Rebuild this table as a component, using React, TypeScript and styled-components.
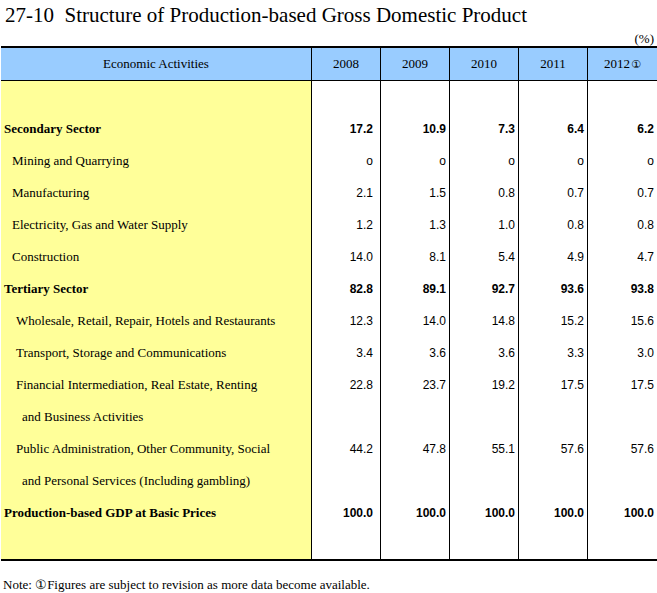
import styled, { createGlobalStyle } from 'styled-components'

const GlobalStyle = createGlobalStyle`
  html, body {
    margin: 0;
    padding: 0;
    background: #ffffff;
  }
  body {
    font-family: 'Liberation Serif', 'Times New Roman', serif;
    color: #000000;
  }
`

type Kind = 'sector' | 'item' | 'sub' | 'cont'

interface RowData {
  label: string
  kind: Kind
  values: string[]
}

const years = ['2008', '2009', '2010', '2011', '2012']

const rows: RowData[] = [
  { label: 'Secondary Sector', kind: 'sector', values: ['17.2', '10.9', '7.3', '6.4', '6.2'] },
  { label: 'Mining and Quarrying', kind: 'item', values: ['o', 'o', 'o', 'o', 'o'] },
  { label: 'Manufacturing', kind: 'item', values: ['2.1', '1.5', '0.8', '0.7', '0.7'] },
  { label: 'Electricity, Gas and Water Supply', kind: 'item', values: ['1.2', '1.3', '1.0', '0.8', '0.8'] },
  { label: 'Construction', kind: 'item', values: ['14.0', '8.1', '5.4', '4.9', '4.7'] },
  { label: 'Tertiary Sector', kind: 'sector', values: ['82.8', '89.1', '92.7', '93.6', '93.8'] },
  { label: 'Wholesale, Retail, Repair, Hotels and Restaurants', kind: 'sub', values: ['12.3', '14.0', '14.8', '15.2', '15.6'] },
  { label: 'Transport, Storage and Communications', kind: 'sub', values: ['3.4', '3.6', '3.6', '3.3', '3.0'] },
  { label: 'Financial Intermediation, Real Estate, Renting', kind: 'sub', values: ['22.8', '23.7', '19.2', '17.5', '17.5'] },
  { label: 'and Business Activities', kind: 'cont', values: ['', '', '', '', ''] },
  { label: 'Public Administration, Other Community, Social', kind: 'sub', values: ['44.2', '47.8', '55.1', '57.6', '57.6'] },
  { label: 'and Personal Services (Including gambling)', kind: 'cont', values: ['', '', '', '', ''] },
  { label: 'Production-based GDP at Basic Prices', kind: 'sector', values: ['100.0', '100.0', '100.0', '100.0', '100.0'] },
]

// right inset of the figures in each year column
const valuePad = [7, 3, 3, 3, 3]

const indent: Record<Kind, number> = {
  sector: 3,
  item: 11,
  sub: 15,
  cont: 21,
}

export default function App() {
  return (
    <>
      <GlobalStyle />
      <Page>
        <Title>27-10&nbsp;&nbsp;Structure of Production-based Gross Domestic Product</Title>
        <Unit>(%)</Unit>

        <Table>
          <HeaderRow>
            <HeadCell>Economic Activities</HeadCell>
            {years.map((y, i) => (
              <HeadCell key={y} last={i === years.length - 1}>
                {y}
                {i === years.length - 1 && <Mark>①</Mark>}
              </HeadCell>
            ))}
          </HeaderRow>

          <Body>
            <Row height={32}>
              <LabelCell indent={0} />
              {years.map((y, i) => (
                <ValueCell key={y} pad={0} last={i === years.length - 1} />
              ))}
            </Row>

            {rows.map((r) => (
              <Row key={r.label} height={32}>
                <LabelCell indent={indent[r.kind]} bold={r.kind === 'sector'}>
                  {r.label}
                </LabelCell>
                {r.values.map((v, i) => (
                  <ValueCell
                    key={i}
                    pad={valuePad[i]}
                    bold={r.kind === 'sector'}
                    last={i === r.values.length - 1}
                  >
                    {v}
                  </ValueCell>
                ))}
              </Row>
            ))}

            <Row height={30}>
              <LabelCell indent={0} />
              {years.map((y, i) => (
                <ValueCell key={y} pad={0} last={i === years.length - 1} />
              ))}
            </Row>
          </Body>
        </Table>

        <Note>Note: ①Figures are subject to revision as more data become available.</Note>
      </Page>
    </>
  )
}

const Page = styled.div`
  width: 657px;
  display: flex;
  flex-direction: column;
`

const Title = styled.h1`
  margin: 0;
  padding: 4px 0 0 5px;
  height: 28px;
  font-size: 21px;
  font-weight: 400;
  line-height: 22px;
  white-space: nowrap;
`

const Unit = styled.div`
  height: 14px;
  padding-right: 3px;
  text-align: right;
  font-size: 13px;
  line-height: 14px;
`

const Table = styled.div`
  margin-left: 1px;
  width: 656px;
  border-top: 2px solid #000;
  border-bottom: 2px solid #000;
`

const grid = `
  display: grid;
  grid-template-columns: 311px repeat(5, 69px);
`

const HeaderRow = styled.div`
  ${grid}
  height: 32px;
  background: #99ccff;
  border-bottom: 1px solid #000;
`

const HeadCell = styled.div<{ last?: boolean }>`
  display: flex;
  align-items: center;
  justify-content: center;
  font-size: 13px;
  border-right: ${({ last }) => (last ? 'none' : '1px solid #000')};
`

const Mark = styled.span`
  font-family: 'DejaVu Sans', 'Noto Sans CJK JP', sans-serif;
  font-size: 11px;
  margin-left: 1px;
`

const Body = styled.div`
  display: flex;
  flex-direction: column;
`

const Row = styled.div<{ height: number }>`
  ${grid}
  height: ${({ height }) => height}px;
`

const LabelCell = styled.div<{ indent: number; bold?: boolean }>`
  display: flex;
  align-items: center;
  padding-left: ${({ indent }) => indent}px;
  background: #ffff99;
  border-right: 1px solid #000;
  font-size: 13px;
  font-weight: ${({ bold }) => (bold ? 700 : 400)};
  white-space: nowrap;
`

const ValueCell = styled.div<{ pad: number; bold?: boolean; last?: boolean }>`
  display: flex;
  align-items: center;
  justify-content: flex-end;
  padding-right: ${({ pad }) => pad}px;
  border-right: ${({ last }) => (last ? 'none' : '1px solid #000')};
  font-family: 'Liberation Sans', Arial, sans-serif;
  font-size: 12px;
  font-weight: ${({ bold }) => (bold ? 700 : 400)};
`

const Note = styled.div`
  padding: 17px 0 0 3px;
  font-size: 13px;
  line-height: 14px;
  white-space: nowrap;
`
